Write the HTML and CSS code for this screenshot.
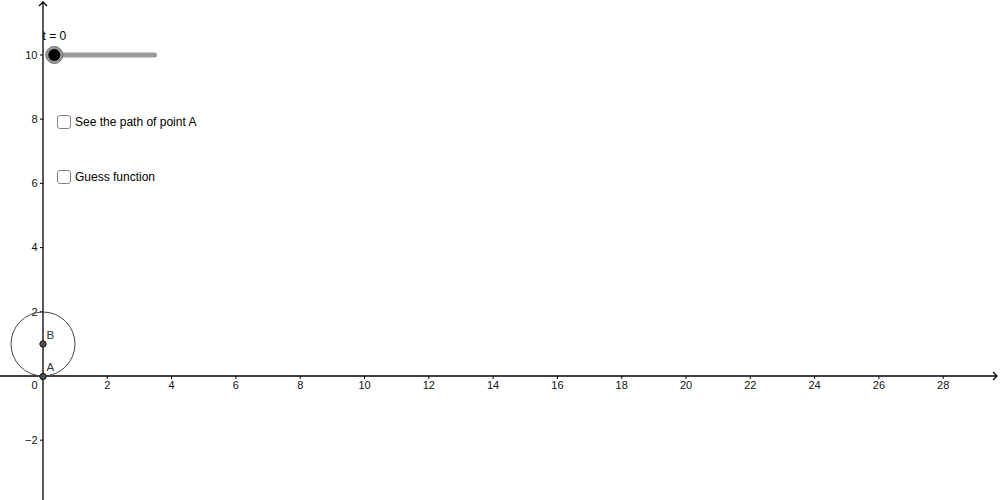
FILE: index.html
```html
<!DOCTYPE html>
<html>
<head>
<meta charset="utf-8">
<link rel="stylesheet" href="styles.css">
</head>
<body>
<div class="app">
  <svg class="graph" width="1000" height="500" viewBox="0 0 1000 500" xmlns="http://www.w3.org/2000/svg">
    <!-- axes -->
    <g class="axis">
      <line x1="0" y1="376" x2="997" y2="376"/>
      <polyline points="993,372 997,376 993,380" fill="none"/>
      <line x1="43" y1="2" x2="43" y2="500"/>
      <polyline points="39,6 43,2 47,6" fill="none"/>
    </g>
    <g class="ticks">
      <line x1="107.3" y1="376" x2="107.3" y2="379"/>
      <line x1="171.6" y1="376" x2="171.6" y2="379"/>
      <line x1="235.9" y1="376" x2="235.9" y2="379"/>
      <line x1="300.2" y1="376" x2="300.2" y2="379"/>
      <line x1="364.5" y1="376" x2="364.5" y2="379"/>
      <line x1="428.8" y1="376" x2="428.8" y2="379"/>
      <line x1="493.1" y1="376" x2="493.1" y2="379"/>
      <line x1="557.4" y1="376" x2="557.4" y2="379"/>
      <line x1="621.7" y1="376" x2="621.7" y2="379"/>
      <line x1="686" y1="376" x2="686" y2="379"/>
      <line x1="750.3" y1="376" x2="750.3" y2="379"/>
      <line x1="814.6" y1="376" x2="814.6" y2="379"/>
      <line x1="878.9" y1="376" x2="878.9" y2="379"/>
      <line x1="943.2" y1="376" x2="943.2" y2="379"/>
      <line x1="40" y1="55" x2="43" y2="55"/>
      <line x1="40" y1="119.2" x2="43" y2="119.2"/>
      <line x1="40" y1="183.4" x2="43" y2="183.4"/>
      <line x1="40" y1="247.6" x2="43" y2="247.6"/>
      <line x1="40" y1="311.8" x2="43" y2="311.8"/>
      <line x1="40" y1="440.2" x2="43" y2="440.2"/>
    </g>
    <g class="xlabels">
      <text x="34.5" y="389">0</text>
      <text x="107.3" y="389">2</text>
      <text x="171.6" y="389">4</text>
      <text x="235.9" y="389">6</text>
      <text x="300.2" y="389">8</text>
      <text x="364.5" y="389">10</text>
      <text x="428.8" y="389">12</text>
      <text x="493.1" y="389">14</text>
      <text x="557.4" y="389">16</text>
      <text x="621.7" y="389">18</text>
      <text x="686" y="389">20</text>
      <text x="750.3" y="389">22</text>
      <text x="814.6" y="389">24</text>
      <text x="878.9" y="389">26</text>
      <text x="943.2" y="389">28</text>
    </g>
    <g class="ylabels">
      <text x="37.5" y="58.8">10</text>
      <text x="37.5" y="123">8</text>
      <text x="37.5" y="187.2">6</text>
      <text x="37.5" y="251.4">4</text>
      <text x="37.5" y="315.6">2</text>
      <text x="37.5" y="444">−2</text>
    </g>
    <!-- circle and points -->
    <circle class="wheel" cx="43" cy="344" r="32"/>
    <circle class="pt" cx="43" cy="344" r="3.2"/>
    <circle class="pt" cx="43" cy="376.5" r="3.2"/>
    <text class="ptlabel" x="46.5" y="338.5">B</text>
    <text class="ptlabel" x="46.5" y="371">A</text>
    <!-- slider -->
    <text class="slabel" x="42.5" y="40">t = 0</text>
    <line class="track" x1="56" y1="55" x2="154.5" y2="55"/>
    <circle class="knob-halo" cx="54.3" cy="55" r="8.5"/>
    <circle class="knob" cx="54.3" cy="55" r="6"/>
  </svg>

  <label class="check check-path"><span class="box"></span><span class="ctext">See the path of point A</span></label>
  <label class="check check-guess"><span class="box"></span><span class="ctext">Guess function</span></label>
</div>
</body>
</html>
```

FILE: styles.css
```css
html, body {
  margin: 0;
  padding: 0;
  background: #ffffff;
}

.app {
  position: relative;
  width: 1000px;
  height: 500px;
  overflow: hidden;
  background: #ffffff;
  font-family: "Liberation Sans", Arial, sans-serif;
}

.graph {
  display: block;
  font-family: "Liberation Sans", Arial, sans-serif;
}

.axis line,
.axis polyline {
  stroke: #000000;
  stroke-width: 1.3;
}

.ticks line {
  stroke: #000000;
  stroke-width: 1;
}

.xlabels text {
  font-size: 11px;
  fill: #111111;
  text-anchor: middle;
}

.ylabels text {
  font-size: 11px;
  fill: #111111;
  text-anchor: end;
}

.wheel {
  fill: none;
  stroke: #444444;
  stroke-width: 1;
}

.pt {
  fill: #4d4d4d;
  stroke: #1a1a1a;
  stroke-width: 1;
}

.ptlabel {
  font-size: 11.5px;
  fill: #333333;
}

.slabel {
  font-size: 12px;
  fill: #000000;
}

.track {
  stroke: #999999;
  stroke-width: 5;
  stroke-linecap: round;
}

.knob-halo {
  fill: #9a9a9a;
  stroke: #6f6f6f;
  stroke-width: 1;
}

.knob {
  fill: #000000;
}

.check {
  position: absolute;
  left: 57px;
  display: flex;
  align-items: center;
  gap: 4px;
  font-size: 12px;
  color: #000000;
  cursor: pointer;
}

.check-path {
  top: 115px;
}

.check-guess {
  top: 170px;
}

.box {
  box-sizing: border-box;
  width: 14px;
  height: 14px;
  border: 1px solid #858585;
  border-radius: 3px;
  background: #ffffff;
}

.ctext {
  line-height: 14px;
}
```
